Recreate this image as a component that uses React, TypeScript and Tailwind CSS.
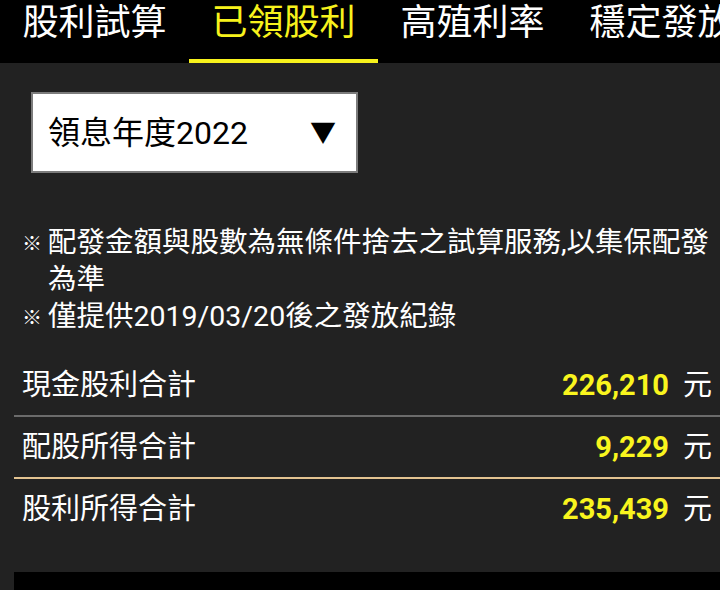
import React from "react";

const tabs = ["股利試算", "已領股利", "高殖利率", "穩定發放"];

const notes = [
  "配發金額與股數為無條件捨去之試算服務,以集保配發為準",
  "僅提供2019/03/20後之發放紀錄",
];

const totals = [
  { label: "現金股利合計", value: "226,210", line: "border-[#6b6b6b]" },
  { label: "配股所得合計", value: "9,229", line: "border-[#e3c391]" },
  { label: "股利所得合計", value: "235,439", line: "border-transparent" },
];

export default function App() {
  return (
    <div
      className="flex h-[590px] w-[720px] flex-col overflow-hidden bg-[#222222] text-white"
      style={{ fontFamily: 'Roboto, "Noto Sans CJK TC", sans-serif' }}
    >
      <nav className="flex h-[63px] flex-shrink-0 overflow-hidden bg-black">
        {tabs.map((tab, i) => {
          const active = i === 1;
          return (
            <div
              key={tab}
              className={
                "flex w-[189px] flex-shrink-0 flex-col items-center justify-between border-b-4 pt-[2px] " +
                (active ? "border-[#f7f21c]" : "border-transparent")
              }
            >
              <span
                className={
                  "whitespace-nowrap text-[36px] leading-[42px] " +
                  (active ? "text-[#f7f21c]" : "text-white")
                }
              >
                {tab}
              </span>
            </div>
          );
        })}
      </nav>

      <main className="flex flex-1 flex-col">
        <div className="ml-[31px] mt-[29px] flex h-[81px] w-[327px] items-center justify-between border-2 border-[#7c7c7c] bg-white pl-[15px] pr-[20px]">
          <span className="text-[32px] leading-none text-black">領息年度2022</span>
          <span className="text-[26px] leading-none text-black">▼</span>
        </div>

        <div className="mt-[51px] flex flex-col pl-[22px]">
          {notes.map((n) => (
            <div key={n} className="flex">
              <span className="w-[26px] flex-shrink-0 pt-[2px] text-[20px] font-bold leading-[37px] text-white">
                ※
              </span>
              <p className="flex-1 text-[28.5px] leading-[37px] text-white">{n}</p>
            </div>
          ))}
        </div>

        <div className="ml-[14px] mt-[18px] flex flex-col">
          {totals.map((t) => (
            <div
              key={t.label}
              className={"flex h-[62px] items-center justify-between border-b-2 pl-[8px] pr-[8px] " + t.line}
            >
              <span className="text-[29px] leading-none">{t.label}</span>
              <span className="flex items-center">
                <span className="text-[29px] font-bold leading-none text-[#f9f51e]">{t.value}</span>
                <span className="ml-[14px] text-[29px] leading-none">元</span>
              </span>
            </div>
          ))}
        </div>

        <div className="ml-[14px] mt-auto h-[18px] bg-black" />
      </main>
    </div>
  );
}
